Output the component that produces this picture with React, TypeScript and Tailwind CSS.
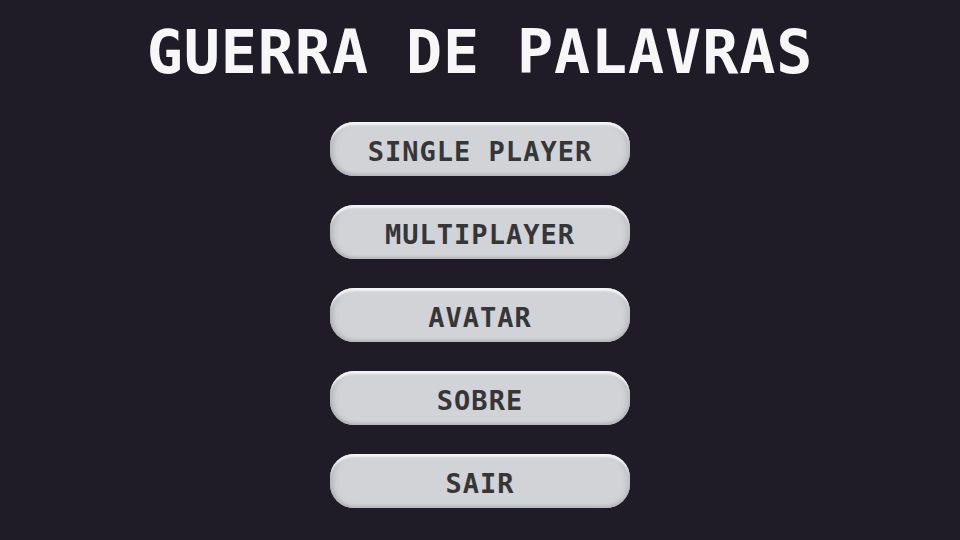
import React from 'react';

const items = ['SINGLE PLAYER', 'MULTIPLAYER', 'AVATAR', 'SOBRE', 'SAIR'];

const MenuButton: React.FC<{ label: string }> = ({ label }) => (
  <button className="w-[300px] h-[54px] pt-[5px] rounded-[24px] bg-[#d1d3d6] text-[#353637] text-[27px] font-bold tracking-[1px] leading-none flex items-center justify-center shadow-[inset_0_4px_2px_-1px_#f3f4f5,inset_5px_0_6px_-3px_#a9abae,inset_-5px_0_6px_-3px_#b3b5b8,inset_0_-3px_3px_-1px_#b8babd]">
    {label}
  </button>
);

export default function App() {
  return (
    <div
      className="w-[960px] h-[540px] bg-[#1f1c27] flex flex-col items-center overflow-hidden"
      style={{ fontFamily: '"DejaVu Sans Mono", "Liberation Mono", monospace' }}
    >
      <h1 className="mt-[20px] text-[60px] font-bold leading-none tracking-[0.9px] text-[#f7f7f7] h-[64px] flex items-center">
        GUERRA DE PALAVRAS
      </h1>
      <div className="mt-[38px] flex flex-col gap-[29px]">
        {items.map((it) => (
          <MenuButton key={it} label={it} />
        ))}
      </div>
    </div>
  );
}
